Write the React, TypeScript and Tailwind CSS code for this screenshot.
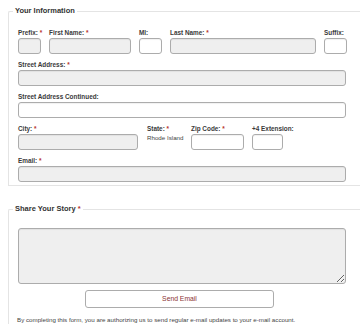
import React from 'react';

const Req: React.FC = () => <span className="text-[#b8322c]"> *</span>;

type FieldProps = {
    label: string;
    req?: boolean;
    width: string;
    gray?: boolean;
};

const Field: React.FC<FieldProps> = ({ label, req, width, gray }) => (
    <div className={`flex flex-col ${width}`}>
        <label className="h-2 mb-px text-[6.4px] leading-[8px] font-bold text-[#3a3a3a] whitespace-nowrap">
            {label}
            {req && <Req />}
        </label>
        <input
            type="text"
            className={`h-4 w-full rounded-[3px] border border-[#acacac] ${gray ? 'bg-[#efefef]' : 'bg-white'} shadow-[inset_0_1px_1px_rgba(0,0,0,0.06)]`}
        />
    </div>
);

const App: React.FC = () => {
    return (
        <div className="w-[360px] h-[325px] overflow-hidden bg-white font-['Liberation_Sans',Arial,sans-serif] text-[#333]">
            {/* Your Information */}
            <fieldset className="mt-[6px] ml-2 border border-r-0 border-[#e4e4e4] rounded-tl-[2px] pl-[9px] pt-[13px] pb-[3px]">
                <legend className="-ml-[5px] px-[2px] text-[7.5px] leading-[10px] font-bold text-[#333]">
                    Your Information
                </legend>

                <div className="flex flex-col gap-[7px]">
                    <div className="flex gap-2">
                        <Field label="Prefix:" req width="w-[23px]" gray />
                        <Field label="First Name:" req width="w-[82px]" gray />
                        <Field label="MI:" width="w-[23px]" />
                        <Field label="Last Name:" req width="w-[146px]" gray />
                        <Field label="Suffix:" width="w-[23px]" />
                    </div>

                    <Field label="Street Address:" req width="w-[328px]" gray />
                    <Field label="Street Address Continued:" width="w-[328px]" />

                    <div className="flex">
                        <Field label="City:" req width="w-[120px]" gray />
                        <div className="flex flex-col w-[44px] ml-[9px]">
                            <span className="h-2 mb-px text-[6.4px] leading-[8px] font-bold text-[#3a3a3a] whitespace-nowrap">
                                State:<Req />
                            </span>
                            <span className="text-[6.2px] leading-[8px] text-[#444] whitespace-nowrap">Rhode Island</span>
                        </div>
                        <Field label="Zip Code:" req width="w-[53px]" />
                        <div className="w-2" />
                        <Field label="+4 Extension:" width="w-[31px]" />
                    </div>

                    <Field label="Email:" req width="w-[328px]" gray />
                </div>
            </fieldset>

            {/* Share Your Story */}
            <fieldset className="mt-[18px] ml-2 border border-r-0 border-b-0 border-[#e4e4e4] rounded-tl-[2px] pl-[9px] pt-[14px]">
                <legend className="-ml-[5px] px-[2px] text-[7.5px] leading-[10px] font-bold text-[#333]">
                    Share Your Story<Req />
                </legend>

                <textarea className="block w-[328px] h-[56px] rounded-[3px] border border-[#acacac] bg-[#efefef] shadow-[inset_0_1px_1px_rgba(0,0,0,0.06)]" />

                <button
                    type="button"
                    className="mt-[3px] ml-[67px] w-[189px] h-[18px] rounded-[3px] border border-[#acacac] bg-white text-[6.8px] text-[#8b3434]"
                >
                    Send Email
                </button>

                <p className="mt-2 -ml-px text-[6.2px] leading-[8px] text-[#444] whitespace-nowrap">
                    By completing this form, you are authorizing us to send regular e-mail updates to your e-mail account.
                </p>
            </fieldset>
        </div>
    );
};

export default App;
